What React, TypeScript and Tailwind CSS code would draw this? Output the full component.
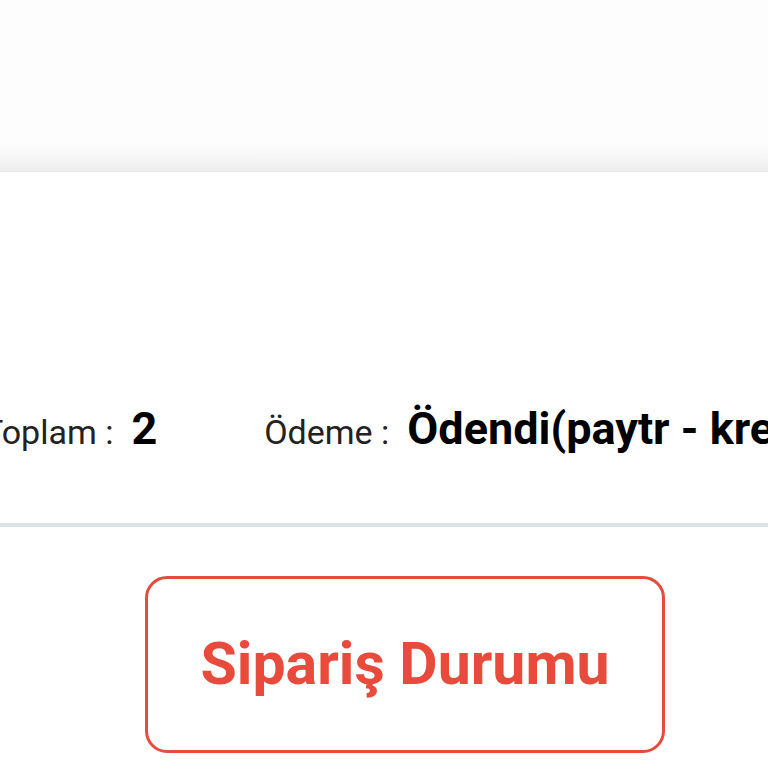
export default function App() {
  return (
    <div className="w-[768px] h-[768px] overflow-hidden bg-white font-['Roboto',sans-serif]">
      <div className="h-[145px] bg-[#fdfdfd]" />
      <div className="h-[27px] bg-linear-to-b from-[#fcfcfc] via-[#f6f6f6] to-[#ebebeb]" />
      <div className="bg-white">
        <div className="pt-[233px] flex items-baseline whitespace-nowrap -ml-[17px] leading-[48px]">
          <div className="flex items-baseline gap-[18px]">
            <span className="text-[34px] text-[#222]">Toplam :</span>
            <span className="text-[45px] font-bold text-black">2</span>
          </div>
          <div className="ml-[107px] flex items-baseline gap-[18px]">
            <span className="text-[34px] text-[#222]">Ödeme :</span>
            <span className="text-[45px] font-bold text-black">Ödendi(paytr - kredi kartı)</span>
          </div>
        </div>
        <div className="mt-[67px] h-[4px] bg-[#dde2e7]" />
        <div className="pt-[49px] pl-[145px]">
          <button className="w-[520px] h-[177px] rounded-[22px] border-[3px] border-[#e84a3c] bg-white flex items-center justify-center pb-[2px]">
            <span className="text-[59px] font-bold text-[#e84a3c] leading-none">Sipariş Durumu</span>
          </button>
        </div>
      </div>
    </div>
  );
}
